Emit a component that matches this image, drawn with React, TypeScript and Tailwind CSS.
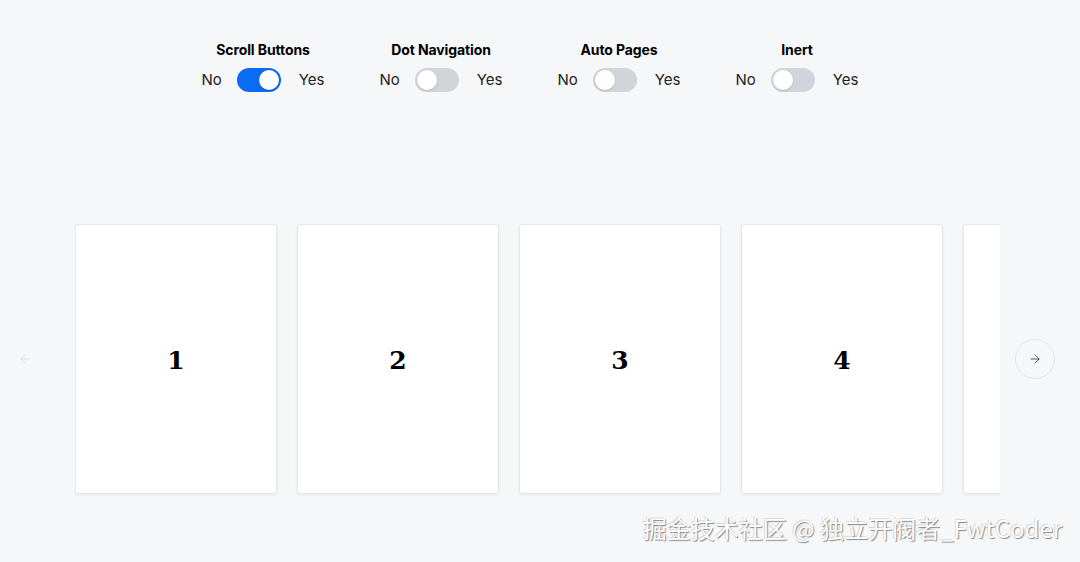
import { useState } from "react";
import { ArrowLeft, ArrowRight } from "lucide-react";

const options = [
  { key: "scroll", label: "Scroll Buttons", on: true },
  { key: "dots", label: "Dot Navigation", on: false },
  { key: "auto", label: "Auto Pages", on: false },
  { key: "inert", label: "Inert", on: false },
];

const Toggle = ({ on, onClick }: { on: boolean; onClick: () => void }) => (
  <button
    onClick={onClick}
    className={`relative h-6 w-11 rounded-full transition ${
      on ? "bg-[#0a6cf5]" : "bg-[#d1d5db]"
    }`}
  >
    <span
      className={`absolute top-[2px] h-5 w-5 rounded-full bg-white shadow-sm transition ${
        on ? "left-[22px]" : "left-[2px]"
      }`}
    />
  </button>
);

export default function App() {
  const [state, setState] = useState<Record<string, boolean>>(
    Object.fromEntries(options.map((o) => [o.key, o.on]))
  );

  return (
    <div
      className="relative h-[562px] w-[1080px] overflow-hidden bg-[#f6f7f9] text-black"
      style={{ fontFamily: "Inter, 'Noto Sans', sans-serif" }}
    >
      <div className="w-[1060px]">
        {/* Options */}
        <div className="flex justify-center gap-[58px] pt-[41px]">
          {options.map((o) => (
            <div key={o.key} className="flex w-[120px] flex-col items-center">
              <span className="text-[14px] font-bold leading-[18px] whitespace-nowrap tracking-[-0.1px]">
                {o.label}
              </span>
              <div className="mt-[9px] flex items-center text-[15px] leading-6 text-[#222]">
                <span>No</span>
                <span className="ml-[15px] mr-[18px] flex">
                  <Toggle
                    on={state[o.key]}
                    onClick={() =>
                      setState((s) => ({ ...s, [o.key]: !s[o.key] }))
                    }
                  />
                </span>
                <span>Yes</span>
              </div>
            </div>
          ))}
        </div>

        {/* Carousel */}
        <div className="mt-[132px] flex items-center">
          <div className="flex w-[50px] justify-center">
            <button className="flex h-10 w-10 items-center justify-center rounded-full text-[#d8dbe0]">
              <ArrowLeft size={14} strokeWidth={1.5} />
            </button>
          </div>
          <div className="ml-[25px] w-[925px] overflow-hidden py-2 -my-2">
            <div className="flex gap-[20px]">
              {[1, 2, 3, 4, 5].map((n) => (
                <div
                  key={n}
                  className="flex h-[270px] w-[202px] shrink-0 items-center justify-center rounded-[3px] border border-[#e4e6ea] bg-white shadow-[0_1px_3px_rgba(0,0,0,0.06)]"
                >
                  <span
                    className="mt-[4px] text-[25px] font-bold"
                    style={{ fontFamily: "'DejaVu Serif', serif" }}
                  >
                    {n}
                  </span>
                </div>
              ))}
            </div>
          </div>
          <div className="ml-[15px] flex">
            <button className="flex h-10 w-10 items-center justify-center rounded-full border border-[#e2e4e8] text-[#444]">
              <ArrowRight size={14} strokeWidth={1.5} />
            </button>
          </div>
        </div>
      </div>

      {/* Watermark */}
      <div
        className="absolute right-[18px] bottom-[16px] text-[24px] text-white"
        style={{
          fontFamily: "'Noto Sans CJK SC', 'Noto Sans', sans-serif",
          textShadow:
            "1px 1px 1px rgba(0,0,0,0.45), -1px -1px 0 rgba(0,0,0,0.15)",
        }}
      >
        掘金技术社区 @ 独立开阀者_FwtCoder
      </div>
    </div>
  );
}
